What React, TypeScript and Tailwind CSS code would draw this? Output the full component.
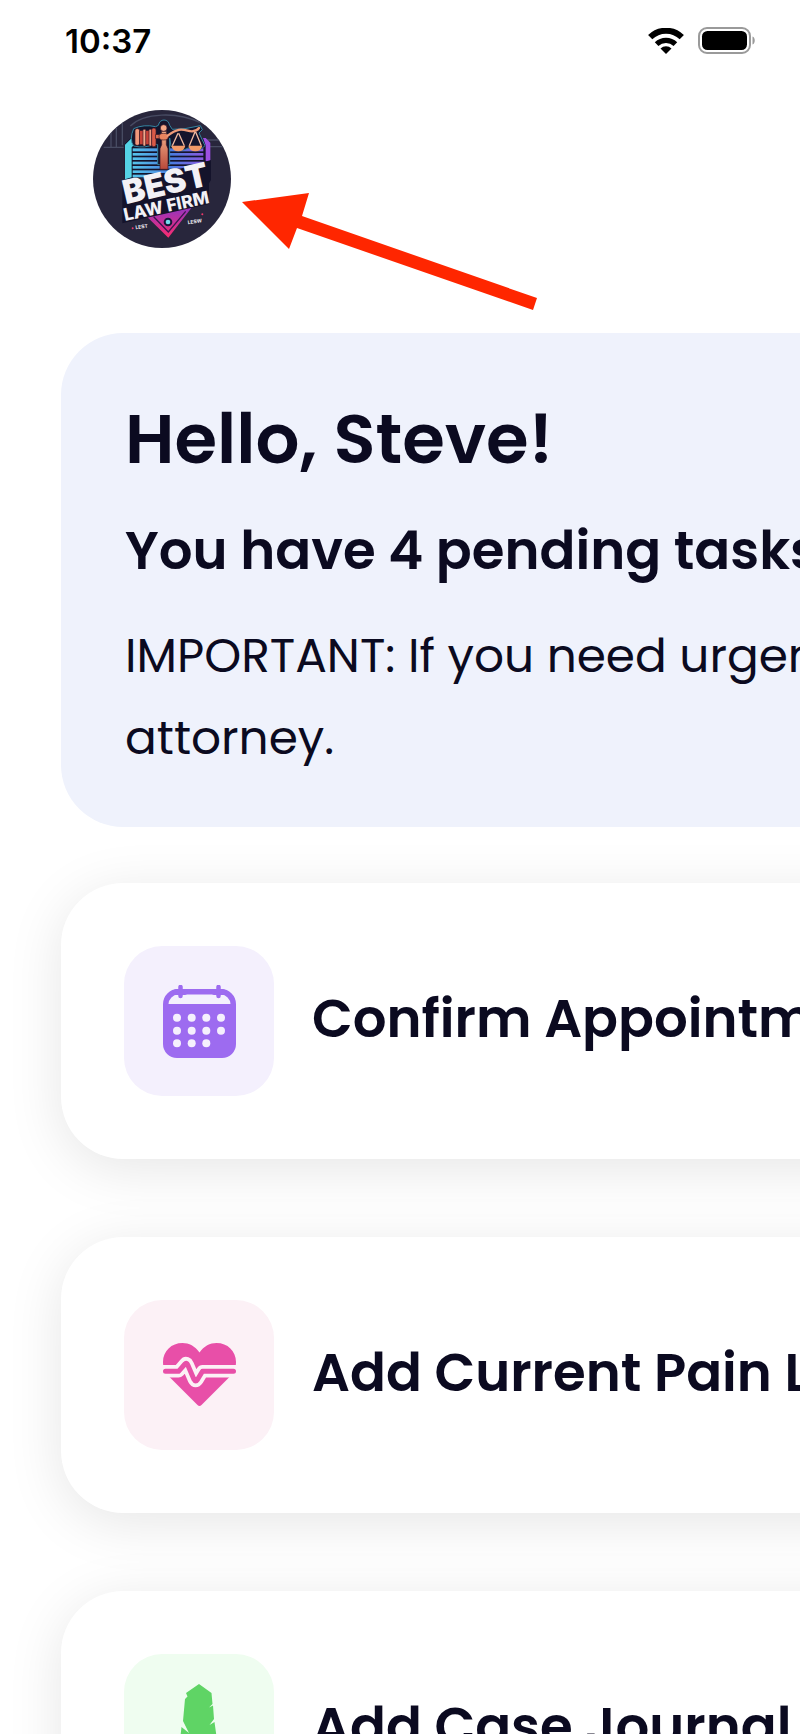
import React from "react";

interface Task {
	id: string;
	label: string;
	tileClassName: string;
	icon: React.ReactNode;
}

function WifiIcon({ className }: { className?: string }) {
	return (
		<svg className={className} viewBox="0 0 36 26" fill="none" aria-hidden="true">
			<path d="M2.2 9.2a22.500 22.500 0 0 1 31.600 0" stroke="#000" strokeWidth="6" />
			<path d="M8.6 16.2a13.500 13.500 0 0 1 18.800 0" stroke="#000" strokeWidth="5.2" />
			<path d="M18 26l-5.500-5.500a7.800 7.800 0 0 1 11 0z" fill="#000" />
		</svg>
	);
}

function BatteryIcon({ className }: { className?: string }) {
	return (
		<svg className={className} viewBox="0 0 58 28" fill="none" aria-hidden="true">
			<rect x="1" y="1" width="51" height="25" rx="8" stroke="#9a9a9a" strokeWidth="2" />
			<rect x="4" y="4" width="45" height="19" rx="5.5" fill="#000" />
			<path d="M54.5 9.5c3 1 3 7 0 8z" fill="#9a9a9a" />
		</svg>
	);
}

function FirmLogo({ className }: { className?: string }) {
	return (
		<svg className={className} viewBox="8 14 414 414" role="img" aria-label="Best Law Firm">
			<defs>
				<linearGradient id="frame" gradientUnits="userSpaceOnUse" x1="127" y1="0" x2="340" y2="0">
					<stop offset="0" stopColor="#55c4ea" />
					<stop offset="0.55" stopColor="#4a7ce0" />
					<stop offset="1" stopColor="#8a58e0" />
				</linearGradient>
				<linearGradient id="chevron" x1="0" y1="0" x2="0" y2="1">
					<stop offset="0" stopColor="#8a35c8" />
					<stop offset="1" stopColor="#fb2c6e" />
				</linearGradient>
				<linearGradient id="copper" x1="0" y1="0" x2="0" y2="1">
					<stop offset="0" stopColor="#f6b48c" />
					<stop offset="1" stopColor="#b8493a" />
				</linearGradient>
				<clipPath id="disc">
					<circle cx="215" cy="221" r="207" />
				</clipPath>
			</defs>
			<g clipPath="url(#disc)">
				<rect x="8" y="14" width="414" height="414" fill="#28263c" />
				<g stroke="#474b62" strokeWidth="4" fill="none">
					<path d="M62 70v55M78 55v70M96 40v80M40 126h60M345 104h55M350 124h60" />
					<path d="M120 62C160 22 260 18 330 52M345 60c30 10 45 30 50 50" />
				</g>
				<path d="M103 225V116l16-16h222l18 14v60l-30 20z" fill="#14142c" />
				<path d="M104 222V118l18-18h28v16h-16l-10 10v90z" fill="#55d3e6" />
				<path d="M338 98h8l14 14v56h-14v-48z" fill="#9d50e2" />
				<g fill="url(#frame)">
					<rect x="127" y="129" width="212" height="9" />
					<rect x="127" y="143" width="212" height="8" />
					<rect x="127" y="156" width="212" height="8" />
					<rect x="127" y="169" width="212" height="8" />
					<rect x="127" y="182" width="190" height="8" />
					<rect x="127" y="195" width="140" height="8" />
					<rect x="127" y="208" width="90" height="8" />
				</g>
				<path
					d="M130 70q30-14 66-6l8-4q4-16 17-16t17 16l8 12 38-2 46-9 6 12-10 10 18 38q-20 24-48 6-30 18-54-4l-4-25v80h-36v-60l-8-2q-30 14-64 6-14-20 0-52z"
					fill="#14142c"
					stroke="#3585a0"
					strokeWidth="3"
				/>
				<g stroke="#3d1a28" strokeWidth="2">
					<rect x="134" y="70" width="14" height="50" rx="6" fill="#f0987c" />
					<rect x="148" y="76" width="36" height="42" fill="#c94238" />
					<rect x="158" y="72" width="8" height="50" rx="3" fill="#f5a98a" />
					<rect x="176" y="72" width="8" height="50" rx="3" fill="#f0987c" />
					<rect x="184" y="68" width="13" height="56" rx="6" fill="#d95a48" />
					<rect x="196" y="88" width="18" height="12" fill="#d96a50" />
					<path d="M214 78h14v40l5 12v62h-24v-62l5-12z" fill="url(#copper)" />
					<circle cx="220" cy="68" r="10" fill="#f3a988" />
					<ellipse cx="220" cy="94" rx="14" ry="10" fill="#e8845f" />
				</g>
				<path d="M232 91c28-22 42-20 60-15 18 5 28 0 34-8" fill="none" stroke="#ee9a78" strokeWidth="7" strokeLinecap="round" />
				<path d="M263 84l-17 37M265 84l17 37M314 80l-17 41M316 80l17 41" stroke="#f0b9a0" strokeWidth="4" />
				<path d="M243 121h42q-4 17-21 17t-21-17zM294 121h42q-4 17-21 17t-21-17z" fill="#f29a68" />
				<path d="M170 334l140-35-76 98z" fill="url(#chevron)" />
				<path d="M190 334l44 46 52-62" fill="none" stroke="#3a164f" strokeWidth="4" />
				<circle cx="233" cy="350" r="13" fill="#19183a" />
				<circle cx="233" cy="350" r="7" fill="#74dcf0" />
				<path d="M96 240l266-76v60l-6 10v62L96 354z" fill="#14132b" />
				<g fill="#f2f1f6" fontFamily="Inter, sans-serif">
					<text x="106" y="297" fontSize="99" fontWeight="900" transform="rotate(-13 106 297)">
						BEST
					</text>
					<text x="104" y="347" fontSize="52" fontWeight="800" transform="rotate(-12 104 347)">
						LAW FIRM
					</text>
					<text x="136" y="372" fontSize="15" fontWeight="700" transform="rotate(-9 136 372)">
						LEST
					</text>
					<text x="293" y="357" fontSize="15" fontWeight="700" transform="rotate(-9 293 357)">
						LESW
					</text>
				</g>
				<circle cx="127" cy="369" r="3" fill="#f0386c" />
				<circle cx="336" cy="327" r="3" fill="#f0386c" />
			</g>
		</svg>
	);
}

function PointerArrow({ className }: { className?: string }) {
	return (
		<svg className={className} viewBox="0 0 296 200" fill="#ff2600" aria-hidden="true">
			<path d="M0 92l67-9-7 23 235 82-4 12-236-82-8 21z" />
		</svg>
	);
}

function CalendarIcon() {
	return (
		<svg className="h-[73px] w-[73px]" viewBox="0 0 73 73" aria-hidden="true">
			<path
				fillRule="evenodd"
				fill="#9d6bf0"
				d="M15 4H58A15 15 0 0 1 73 19V59A14 14 0 0 1 59 73H14A14 14 0 0 1 0 59V19A15 15 0 0 1 15 4ZM15 9.5A10 10 0 0 0 5.5 19H67.5A10 10 0 0 0 58 9.5Z"
			/>
			<path d="M17.5 2v9M55.5 2v9" stroke="#9d6bf0" strokeWidth="4.5" strokeLinecap="round" />
			<path d="M13.5 7h8M51.5 7h8" stroke="#9d6bf0" strokeWidth="6" strokeLinecap="round" />
			<g fill="#f5f0fd">
				{[32.7, 45.7, 58.3].map((cy, row) =>
					[14, 28.7, 43.3, 58]
						.slice(0, row === 2 ? 3 : 4)
						.map((cx) => <circle key={`${cx}-${cy}`} cx={cx} cy={cy} r="4" />)
				)}
			</g>
		</svg>
	);
}

function HeartIcon() {
	const pulse = "H15.5L22 21Q23.500 19 24.800 22L31 36.500Q32.500 39.500 34.500 36.500L39.500 28.3";
	return (
		<svg className="h-[64px] w-[73px]" viewBox="0 0 73 64" fill="none" aria-hidden="true">
			<path
				fill="#e84fa8"
				d="M36.5 9.5C32 3 26 0 19.5 0 8.5 0 0 8 0 19c0 7 3 11.500 8 16.500L34.500 62q2 2 4 0L65 35.500C70 30.500 73 26 73 19 73 8 64.500 0 53.500 0 47 0 41 3 36.500 9.500Z"
			/>
			<path d={`M-4 28.3${pulse}H78`} stroke="#fcf1f6" strokeWidth="12.5" strokeLinejoin="round" />
			<path d={`M2.500 28.3${pulse}H70.500`} stroke="#e84fa8" strokeWidth="5" strokeLinecap="round" strokeLinejoin="round" />
		</svg>
	);
}

function FeatherIcon() {
	return (
		<svg className="h-[90px] w-[73px]" viewBox="0 0 73 90" aria-hidden="true">
			<path
				d="M36 0L48.500 9L49.500 20L46 23.500L50 21.500L51 35L46.500 41L51.500 38L54 56L42 72L38 90H34L30 72L17 56L18.500 43L26 49L20 37L22 15L24.500 12.500L23 9Z"
				fill="#5fd465"
			/>
		</svg>
	);
}

const tasks: Task[] = [
	{ id: "appointment", label: "Confirm Appointment", tileClassName: "bg-[#f4f0fd]", icon: <CalendarIcon /> },
	{ id: "pain", label: "Add Current Pain Level", tileClassName: "bg-[#fcf1f6]", icon: <HeartIcon /> },
	{ id: "journal", label: "Add Case Journal", tileClassName: "bg-[#effdf0]", icon: <FeatherIcon /> },
];

function TaskCard({ label, tileClassName, icon }: Omit<Task, "id">) {
	return (
		<button className="flex items-center gap-[38px] rounded-l-[62px] bg-white p-[63px] text-left shadow-[0_10px_56px_rgba(0,0,0,0.1)]">
			<span className={`flex h-[150px] w-[150px] shrink-0 items-center justify-center rounded-[38px] ${tileClassName}`}>
				{icon}
			</span>
			<span className="pb-1 text-[53px] leading-[80px] font-semibold whitespace-nowrap">{label}</span>
		</button>
	);
}

export default function App() {
	return (
		<div className="h-screen overflow-hidden bg-white font-['Poppins','Inter',sans-serif] text-[#0b0a20]">
			<div className="flex h-[82px] items-center justify-between pl-[65px] pr-[44px] text-black">
				<span className="font-['Inter',sans-serif] text-[33px] leading-[40px] font-semibold">10:37</span>
				<div className="flex items-center gap-[14px]">
					<WifiIcon className="h-[26px] w-[36px]" />
					<BatteryIcon className="h-[28px] w-[58px]" />
				</div>
			</div>
			<header className="flex items-start gap-[11px] pt-7 pl-[93px]">
				<FirmLogo className="h-[138px] w-[138px]" />
				<PointerArrow className="h-[200px] w-[296px]" />
			</header>
			{/* the content is wider than the screen and runs off its right edge */}
			<main className="-mr-20 flex flex-col pt-[23px] pl-[61px]">
				<section className="flex flex-col gap-6 rounded-l-[62px] bg-[#eff2fc] pt-[58px] pb-12 pl-16">
					<h1 className="text-[69px] leading-[96px] font-semibold whitespace-nowrap">Hello, Steve!</h1>
					<h2 className="text-[53px] leading-[80px] font-semibold whitespace-nowrap">You have 4 pending tasks</h2>
					<p className="text-[47px] leading-[82px] whitespace-nowrap">
						IMPORTANT: If you need urgent
						<br />
						attorney.
					</p>
				</section>
				<div className="flex flex-col gap-[78px] pt-14">
					{tasks.map(({ id, ...task }) => (
						<TaskCard key={id} {...task} />
					))}
				</div>
			</main>
		</div>
	);
}
